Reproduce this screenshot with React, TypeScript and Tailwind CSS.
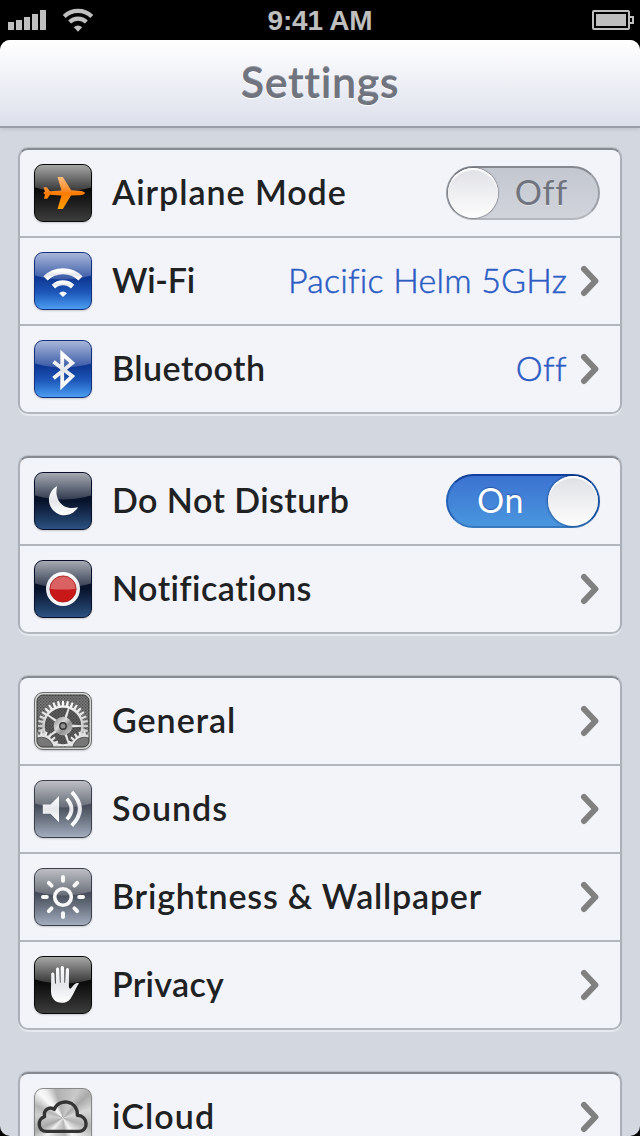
import React from 'react';

type IconName = 'airplane' | 'wifi' | 'bluetooth' | 'moon' | 'notifications' | 'gear' | 'sound' | 'brightness' | 'hand' | 'cloud';

interface RowItem {
   label: string;
   tracking: string;
   icon: IconName;
   value?: string;
   valueTracking?: string;
   toggle?: 'on' | 'off';
}

const groups: RowItem[][] = [
   [
      { label: 'Airplane Mode', tracking: 'tracking-[0.95px]', icon: 'airplane', toggle: 'off' },
      { label: 'Wi-Fi', tracking: 'tracking-[-0.2px]', icon: 'wifi', value: 'Pacific Helm 5GHz', valueTracking: 'tracking-[0.2px]' },
      { label: 'Bluetooth', tracking: 'tracking-[0.45px]', icon: 'bluetooth', value: 'Off', valueTracking: 'tracking-[0.4px]' },
   ],
   [
      { label: 'Do Not Disturb', tracking: 'tracking-[0.45px]', icon: 'moon', toggle: 'on' },
      { label: 'Notifications', tracking: 'tracking-[0.5px]', icon: 'notifications' },
   ],
   [
      { label: 'General', tracking: 'tracking-[1px]', icon: 'gear' },
      { label: 'Sounds', tracking: 'tracking-[1px]', icon: 'sound' },
      { label: 'Brightness & Wallpaper', tracking: 'tracking-[0.78px]', icon: 'brightness' },
      { label: 'Privacy', tracking: 'tracking-[0.3px]', icon: 'hand' },
   ],
   [{ label: 'iCloud', tracking: 'tracking-[1.1px]', icon: 'cloud' }],
];

const tiles: Record<IconName, string> = {
   airplane: 'border-[#080808] bg-linear-to-b from-[#0b0b0b] from-45% to-[#3d3d3d]',
   wifi: 'border-[#12307c] bg-linear-to-b from-[#0f3794] from-45% via-[#1d56b8] via-70% to-[#4b9df0]',
   bluetooth: 'border-[#12307c] bg-linear-to-b from-[#0f3794] from-45% via-[#1d56b8] via-70% to-[#4b9df0]',
   moon: 'border-[#06102a] bg-linear-to-b from-[#08132b] from-50% to-[#2c5283]',
   notifications: 'border-[#06102a] bg-linear-to-b from-[#08132b] from-50% to-[#2c5283]',
   gear: 'border-[#6c6c6c] bg-[#d5d5d5]',
   sound: 'border-[#3b404c] bg-linear-to-b from-[#474d5a] from-45% to-[#a2adbe]',
   brightness: 'border-[#3b404c] bg-linear-to-b from-[#474d5a] from-45% to-[#a2adbe]',
   hand: 'border-[#080808] bg-linear-to-b from-[#0b0b0b] from-45% to-[#3d3d3d]',
   cloud: 'border-[#888888] bg-[conic-gradient(from_0deg_at_50%_52%,#b8b8b8,#c9c9c9_8%,#a9a9a9_13%,#d8d8d8_20%,#b2b2b2_30%,#dedede_37%,#f5f5f5_42%,#b5b5b5_48%,#cfcfcf_57%,#f0f0f0_62%,#a8a8a8_68%,#d0d0d0_77%,#b4b4b4_82%,#fafafa_88%,#eeeeee_91%,#b0b0b0_96%,#b8b8b8)]',
};

// Toothed outline of a gear, alternating between the root and tip radius
const gearPath = (cx: number, cy: number, tip: number, root: number, teeth: number) => {
   const step = (Math.PI * 2) / teeth;
   const pts: string[] = [];
   for (let i = 0; i < teeth; i++) {
      const a = i * step - Math.PI / 2;
      [[-0.32, root], [-0.2, tip], [0.2, tip], [0.32, root]].forEach(([o, r]) => {
         pts.push(`${(cx + Math.cos(a + o * step) * r).toFixed(2)} ${(cy + Math.sin(a + o * step) * r).toFixed(2)}`);
      });
   }
   return `M${pts.join('L')}Z`;
};

const Gear: React.FC = () => (
   <g>
      <defs>
         <pattern id="mesh" width="3" height="3" patternUnits="userSpaceOnUse">
            <rect width="3" height="3" fill="#7c7c7c" />
            <rect width="1.4" height="1.4" fill="#4c4c4c" />
            <rect x="1.5" y="1.5" width="1.4" height="1.4" fill="#555" />
         </pattern>
         <linearGradient id="steel" x1="0" y1="0" x2="0" y2="1">
            <stop offset="0" stopColor="#fff" />
            <stop offset="0.5" stopColor="#c9c9c9" />
            <stop offset="1" stopColor="#f2f2f2" />
         </linearGradient>
         <linearGradient id="hub" x1="0" y1="0" x2="1" y2="1">
            <stop offset="0" stopColor="#858585" />
            <stop offset="0.4" stopColor="#d8d8d8" />
            <stop offset="0.6" stopColor="#919191" />
            <stop offset="1" stopColor="#d0d0d0" />
         </linearGradient>
         <clipPath id="face">
            <rect x="3" y="3" width="52" height="52" rx="6" />
         </clipPath>
      </defs>
      <rect x="3" y="3" width="52" height="52" rx="6" fill="url(#mesh)" />
      <g clipPath="url(#face)">
         <path d={`${gearPath(29, 34, 25.2, 20.6, 32)}M29 15.8a18.2 18.2 0 1 0 0 36.4a18.2 18.2 0 0 0 0-36.4Z`} fill="url(#steel)" fillRule="evenodd" />
         <circle cx="29" cy="34" r="18.2" fill="#2c2c2c" fillOpacity="0.35" />
         {[18, 90, 162, 234, 306].map(a => (
            <path key={a} d="M27.6 28L28.2 15H29.8L30.4 28Z" fill="#e6e6e6" transform={`rotate(${a} 29 34)`} />
         ))}
         <circle cx="29" cy="34" r="9.3" fill="url(#hub)" />
         <circle cx="29" cy="34" r="3.2" fill="#8d8d8d" stroke="#333" strokeWidth="1.4" />
         {[7.5, 50.5].map(x => (
            <g key={x}>
               <path d={gearPath(x, 57, 18, 14, 22)} fill="#e4e4e4" />
               <circle cx={x} cy="57" r="11.8" fill="#777" stroke="#494949" strokeWidth="0.8" />
            </g>
         ))}
      </g>
      <rect x="3" y="3" width="52" height="52" rx="6" fill="none" stroke="#3a3a3a" />
   </g>
);

const glyphs: Record<IconName, React.ReactNode> = {
   airplane: (
      <path
         d="M9.5 23.2H12.6L16 27.2L27.5 26.4L23.5 13H28.8L37.2 26.3L45 26.7C48.5 27 51 28 51 29C51 30 48.5 31 45 31.2L37 31.6L28.8 45H23.5L27.5 31.6L16 30.8L13.2 34.8H10L11 30.4L9.2 29L11 27.6Z"
         fill="url(#orange)"
      />
   ),
   wifi: (
      <g fill="none" stroke="url(#white)">
         <path d="M11.5 26.3A25 25 0 0 1 46.5 26.3" strokeWidth="6" />
         <path d="M19.4 34.6A14 14 0 0 1 38.6 34.6" strokeWidth="5" />
         <path d="M25.1 41.2Q29 37.6 32.9 41.2L29 45Z" fill="#fff" stroke="none" />
      </g>
   ),
   bluetooth: (
      <path d="M19.5 21.8L38.3 36.2L28.2 45.8V14L38.3 23L19.5 38.2" fill="none" stroke="url(#white)" strokeWidth="3.8" />
   ),
   moon: <path d="M23.2 14A15.5 15.5 0 1 0 44 35.2C35.6 37.4 28.4 35 24.6 28.4C22 23.6 22 18.6 23.2 14Z" fill="url(#white)" />,
   notifications: (
      <g>
         <circle cx="29" cy="29" r="17" fill="url(#white)" />
         <circle cx="29" cy="29" r="13.1" fill="#c91818" stroke="#a31414" strokeWidth="0.8" />
         <path d="M16.4 29A12.6 12.6 0 0 1 41.6 29Q29 30 16.4 29Z" fill="#fff" fillOpacity="0.32" />
      </g>
   ),
   gear: <Gear />,
   sound: (
      <g>
         <path d="M8.8 24.5H16.5L25 16V42.3L16.5 33.7H8.8Z" fill="url(#white)" />
         <path d="M32.8 18.8Q42.2 29 32.8 39.3" fill="none" stroke="url(#white)" strokeWidth="3.8" />
         <path d="M37.8 12.2Q54 29 37.8 45.6" fill="none" stroke="url(#white)" strokeWidth="3.9" />
      </g>
   ),
   brightness: (
      <g fill="none" stroke="#f7f7f7" strokeWidth="4" strokeLinecap="round">
         <circle cx="29" cy="29" r="8.3" strokeWidth="3.6" />
         {[0, 45, 90, 135, 180, 225, 270, 315].map(a => (
            <path key={a} d="M29 9V12.8" transform={`rotate(${a} 29 29)`} />
         ))}
      </g>
   ),
   hand: (
      <path
         d="M17.2 18.2C17.2 16 20.3 16 20.4 18.2L21 27.6H21.9L22 13.4C22.1 11 25.1 11 25.2 13.4L25.9 26.8H26.6L26.7 11.6C26.8 9.3 29.9 9.3 30 11.6L30.4 26.8H31.1L31.9 13.6C32.1 11.3 34.9 11.3 35 13.6L34.9 30.8C35.5 33.2 36.5 33 37.7 31.6C39.5 29.4 41 26.6 44.6 27C45.2 27.4 44.6 28 43.7 29.2C41.4 32.6 39.8 38 36.6 42.4C33.4 47.6 24 48.6 19.8 43.6C17 40.2 17 37 17 33.6Z"
         fill="url(#white)"
      />
   ),
   cloud: (
      <path
         d="M12.5 43.4C3.5 43.4 2.8 31 10.6 28.6C9.2 22 15.5 17.9 20.2 21.4C24.6 10 43.6 11.6 43.4 27.2C55 28 54.5 43.4 44.8 43.4Z"
         fill="none"
         stroke="#343434"
         strokeWidth="3.4"
         strokeLinejoin="round"
      />
   ),
};

const Tile: React.FC<{ name: IconName }> = ({ name }) => (
   <div className={`size-[58px] shrink-0 rounded-[9px] border shadow-[0_1px_2px_rgba(0,0,0,0.18)] overflow-hidden ${tiles[name]}`}>
      <svg width="58" height="58" viewBox="0 0 58 58" className="-ml-px -mt-px block">
         <defs>
            <linearGradient id="gloss" x1="0" y1="0" x2="0" y2="1">
               <stop offset="0" stopColor="#fff" stopOpacity="0.64" />
               <stop offset="1" stopColor="#fff" stopOpacity="0.17" />
            </linearGradient>
            <linearGradient id="white" x1="0" y1="0" x2="0" y2="1">
               <stop offset="0" stopColor="#ffffff" />
               <stop offset="0.5" stopColor="#e4e6ea" />
               <stop offset="1" stopColor="#ffffff" />
            </linearGradient>
            <linearGradient id="orange" x1="0" y1="0" x2="0" y2="1">
               <stop offset="0" stopColor="#ffbc7c" />
               <stop offset="0.45" stopColor="#ff8620" />
               <stop offset="0.5" stopColor="#ff7a00" />
               <stop offset="1" stopColor="#ffa000" />
            </linearGradient>
         </defs>
         {name !== 'gear' && name !== 'cloud' && <path d="M1 1H57V23.5Q29 31.5 1 23.5Z" fill="url(#gloss)" />}
         {glyphs[name]}
      </svg>
   </div>
);

const Toggle: React.FC<{ on: boolean }> = ({ on }) =>
   on ? (
      <div className="flex h-[54px] w-[154px] items-center justify-between rounded-full border-2 border-t-[#12419b] border-x-[#2560b4] border-b-[#3779bf] bg-linear-to-b from-[#3c72d2] to-[#4a96de] pl-[29px]">
         <span className="pb-[3px] text-[34px] leading-none font-normal tracking-[0.6px] text-white [text-shadow:0_-1px_1px_rgba(20,50,120,0.5)]">On</span>
         <span className="size-[50px] rounded-full bg-linear-to-b from-[#dfe0e4] to-[#fdfdfd] shadow-[inset_0_2px_1px_#fff,0_0_2px_1px_rgba(0,30,80,0.4)]"></span>
      </div>
   ) : (
      <div className="flex h-[54px] w-[154px] items-center justify-between rounded-full border-2 border-t-[#85888f] border-x-[#9c9fa6] border-b-[#b4b6bc] bg-linear-to-b from-[#c3c7cf] to-[#d1d4db] pr-[30px]">
         <span className="size-[50px] rounded-full bg-linear-to-b from-[#e0e1e6] to-[#fdfdfd] shadow-[inset_0_2px_1px_#fff,0_0_1px_1px_rgba(90,94,104,0.5)]"></span>
         <span className="pb-[3px] text-[34px] leading-none font-normal tracking-[0.8px] text-[#70747f] [text-shadow:0_1px_0_rgba(255,255,255,0.4)]">Off</span>
      </div>
   );

const Row: React.FC<{ item: RowItem }> = ({ item }) => (
   <div className="flex h-[88px] items-center border-b-2 border-[#b0b5be] pl-3.5 pr-5 last:h-[86px] last:border-b-0">
      <Tile name={item.icon} />
      <span className={`ml-5 flex-1 pb-[3px] whitespace-nowrap text-[34px] leading-none font-semibold text-[#202122] ${item.tracking}`}>{item.label}</span>
      {item.value && (
         <span className={`mr-[13px] pb-[3px] whitespace-nowrap text-[34px] leading-none font-light text-[#2b5cc4] [-webkit-text-stroke:0.5px_#2b5cc4] ${item.valueTracking}`}>
            {item.value}
         </span>
      )}
      {item.toggle ? (
         <Toggle on={item.toggle === 'on'} />
      ) : (
         <svg width="20" height="32" viewBox="0 0 20 32" className="shrink-0">
            <path d="M4 4L15.4 16L4 28" fill="none" stroke="#808080" strokeWidth="6" strokeLinecap="round" strokeLinejoin="round" />
         </svg>
      )}
   </div>
);

const StatusBar: React.FC = () => (
   <div className="grid h-10 shrink-0 grid-cols-3 items-center bg-black px-2 text-[#bfbfbf]">
      <div className="flex items-center gap-[15px]">
         <svg width="40" height="20" viewBox="0 0 40 20" fill="#bfbfbf">
            <path d="M0 12H6V20H0ZM8 10H14V20H8ZM16 7H22V20H16ZM24 4H30V20H24ZM32 0H38V20H32Z" />
         </svg>
         <svg width="30" height="24" viewBox="0 0 30 24" fill="none" stroke="#bfbfbf">
            <path d="M1.2 8.4A20 20 0 0 1 28.8 8.4" strokeWidth="4.2" />
            <path d="M6.6 14A12.3 12.3 0 0 1 23.4 14" strokeWidth="4.2" />
            <path d="M10.8 19.3Q15 15.6 19.2 19.3L15 23.8Z" fill="#bfbfbf" stroke="none" />
         </svg>
      </div>
      <span className="pt-px text-center font-['Liberation_Sans',sans-serif] text-[28px] leading-none font-bold tracking-[-0.2px]">9:41 AM</span>
      <svg width="42" height="20" viewBox="0 0 42 20" className="justify-self-end -mr-[2px]">
         <rect x="1" y="1" width="36" height="18" rx="1" fill="none" stroke="#bfbfbf" strokeWidth="2" />
         <rect x="4" y="4" width="30" height="12" fill="#bfbfbf" />
         <path d="M38 7H41V13H38" fill="none" stroke="#bfbfbf" strokeWidth="2" />
      </svg>
   </div>
);

const App: React.FC = () => {
   return (
      <div className="flex h-[1136px] w-[640px] flex-col overflow-hidden bg-black font-['Lato',sans-serif]">
         <StatusBar />
         <div className="flex flex-1 flex-col overflow-hidden rounded-[10px] bg-[#d3d7e0]">
            <header className="flex h-[88px] shrink-0 items-center justify-center border-b-2 border-[#989da9] bg-linear-to-b from-white to-[#dde0ec] shadow-[0_2px_3px_rgba(0,0,0,0.08)]">
               <h1 className="pb-1 text-[43px] leading-none font-semibold tracking-[0.6px] text-[#70747f] [text-shadow:0_-1px_0_rgba(60,64,74,0.5),0_1px_0_#fff]">Settings</h1>
            </header>

            <main className="flex flex-col gap-[42px] px-[18px] pt-5">
               {groups.map((rows, i) => (
                  <section
                     key={i}
                     className="shrink-0 rounded-[10px] border-2 border-x-[#abb0b9] border-t-[#858a93] border-b-[#b3b7c0] bg-[#f3f4f9] shadow-[0_2px_0_rgba(255,255,255,0.45),0_-1px_1px_rgba(0,0,0,0.12)]"
                  >
                     {rows.map(item => (
                        <Row key={item.label} item={item} />
                     ))}
                  </section>
               ))}
            </main>
         </div>
      </div>
   );
};

export default App;
